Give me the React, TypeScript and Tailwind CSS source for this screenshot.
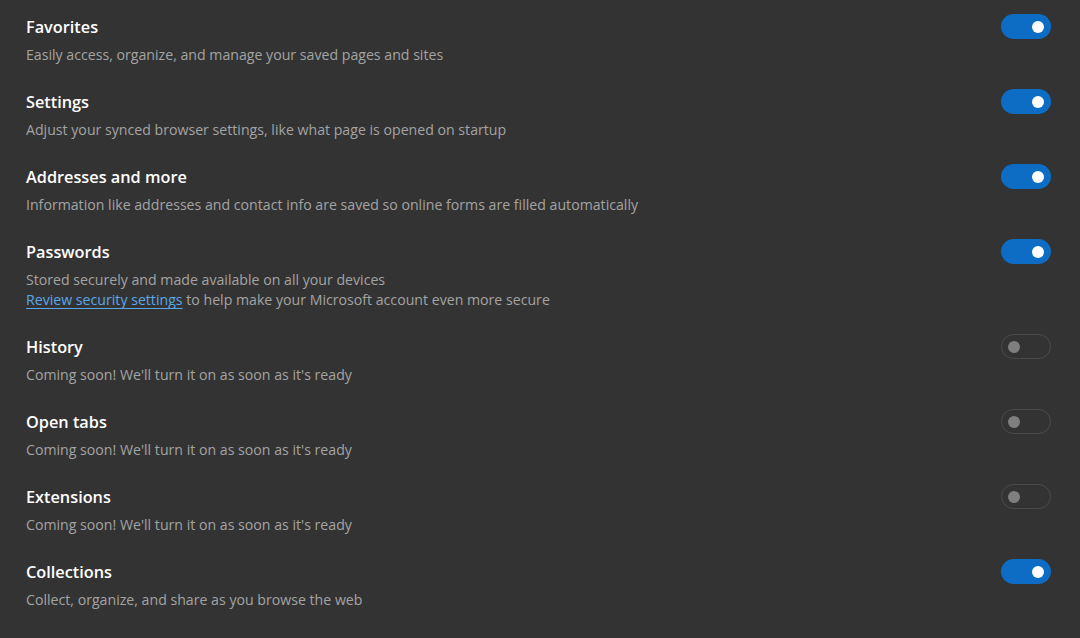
type SyncItem = {
  title: string;
  desc: string;
  on: boolean;
  link?: { label: string; rest: string };
};

const items: SyncItem[] = [
  { title: 'Favorites', desc: 'Easily access, organize, and manage your saved pages and sites', on: true },
  { title: 'Settings', desc: 'Adjust your synced browser settings, like what page is opened on startup', on: true },
  {
    title: 'Addresses and more',
    desc: 'Information like addresses and contact info are saved so online forms are filled automatically',
    on: true,
  },
  {
    title: 'Passwords',
    desc: 'Stored securely and made available on all your devices',
    on: true,
    link: { label: 'Review security settings', rest: ' to help make your Microsoft account even more secure' },
  },
  { title: 'History', desc: "Coming soon! We'll turn it on as soon as it's ready", on: false },
  { title: 'Open tabs', desc: "Coming soon! We'll turn it on as soon as it's ready", on: false },
  { title: 'Extensions', desc: "Coming soon! We'll turn it on as soon as it's ready", on: false },
  { title: 'Collections', desc: 'Collect, organize, and share as you browse the web', on: true },
];

function Toggle({ on }: { on: boolean }) {
  return on ? (
    <div className="flex h-[25px] w-[50px] shrink-0 items-center justify-end rounded-full bg-[#0d6cc4] pr-[7px]">
      <div className="h-[12px] w-[12px] rounded-full bg-white" />
    </div>
  ) : (
    // disabled / coming soon
    <div className="flex h-[25px] w-[50px] shrink-0 items-center rounded-full border border-[#4a4a4a] pl-[6px]">
      <div className="h-[12px] w-[12px] rounded-full bg-[#7f7f7f]" />
    </div>
  );
}

export default function App() {
  return (
    <div
      className="min-h-[638px] w-full bg-[#333333] pt-[14px] pl-[26px] pr-[29px]"
      style={{ fontFamily: '"Open Sans", "Noto Sans", sans-serif' }}
    >
      {items.map((it) => (
        <div key={it.title} className="flex items-start justify-between pb-[24px]">
          <div>
            <div className="h-[26px] text-[16.3px] leading-[26px] font-semibold text-white">{it.title}</div>
            <div className="mt-[5px] text-[14.15px] leading-[20px] text-[#a3a3a3]">{it.desc}</div>
            {it.link && (
              <div className="text-[14.15px] leading-[20px] text-[#a3a3a3]">
                <span className="text-[#5aa7e8] underline underline-offset-[3px]">{it.link.label}</span>
                {it.link.rest}
              </div>
            )}
          </div>
          <Toggle on={it.on} />
        </div>
      ))}
    </div>
  );
}
